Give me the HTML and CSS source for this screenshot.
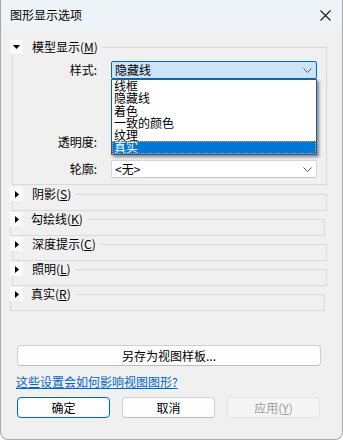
FILE: index.html
```html
<!DOCTYPE html>
<html lang="zh-CN">
<head>
    <meta charset="UTF-8">
    <title>图形显示选项</title>
    <link rel="stylesheet" href="styles.css">
</head>
<body>
    <div class="window">
        <div class="titlebar">
            <span class="title">图形显示选项</span>
            <svg class="close" width="11" height="11" viewBox="0 0 11 11">
                <path d="M0.5 0.5 L10.5 10.5 M10.5 0.5 L0.5 10.5" stroke="#1a1a1a" stroke-width="1.1"/>
            </svg>
        </div>

        <div class="content">
            <fieldset class="group open">
                <legend>
                    <span class="toggle">
                        <svg width="7" height="4" viewBox="0 0 7 4"><polygon points="0,0 7,0 3.5,4" fill="#000"/></svg>
                    </span>
                    <span class="caption">模型显示(<u>M</u>)</span>
                </legend>
                <div class="row first">
                    <span class="label">样式:</span>
                    <div class="combo active">
                        <span>隐藏线</span>
                        <svg class="chev" width="9" height="5" viewBox="0 0 9 5"><path d="M0.5 0.5 L4.5 4.5 L8.5 0.5" fill="none" stroke="#555" stroke-width="1"/></svg>
                        <ul class="dropdown">
                            <li>线框</li>
                            <li>隐藏线</li>
                            <li>着色</li>
                            <li>一致的颜色</li>
                            <li>纹理</li>
                            <li class="selected">真实</li>
                        </ul>
                    </div>
                </div>
                <div class="row trans">
                    <span class="label">透明度:</span>
                    <div class="empty"></div>
                </div>
                <div class="row outline">
                    <span class="label">轮廓:</span>
                    <div class="combo">
                        <span>&lt;无&gt;</span>
                        <svg class="chev" width="9" height="5" viewBox="0 0 9 5"><path d="M0.5 0.5 L4.5 4.5 L8.5 0.5" fill="none" stroke="#555" stroke-width="1"/></svg>
                    </div>
                </div>
            </fieldset>

            <fieldset class="group closed">
                <legend>
                    <span class="toggle"><svg width="4" height="7" viewBox="0 0 4 7"><polygon points="0,0 4,3.5 0,7" fill="#000"/></svg></span>
                    <span class="caption">阴影(<u>S</u>)</span>
                </legend>
                <div class="spacer"></div>
            </fieldset>

            <fieldset class="group closed alt">
                <legend>
                    <span class="toggle"><svg width="4" height="7" viewBox="0 0 4 7"><polygon points="0,0 4,3.5 0,7" fill="#000"/></svg></span>
                    <span class="caption">勾绘线(<u>K</u>)</span>
                </legend>
                <div class="spacer"></div>
            </fieldset>

            <fieldset class="group closed">
                <legend>
                    <span class="toggle"><svg width="4" height="7" viewBox="0 0 4 7"><polygon points="0,0 4,3.5 0,7" fill="#000"/></svg></span>
                    <span class="caption">深度提示(<u>C</u>)</span>
                </legend>
                <div class="spacer"></div>
            </fieldset>

            <fieldset class="group closed">
                <legend>
                    <span class="toggle"><svg width="4" height="7" viewBox="0 0 4 7"><polygon points="0,0 4,3.5 0,7" fill="#000"/></svg></span>
                    <span class="caption">照明(<u>L</u>)</span>
                </legend>
                <div class="spacer"></div>
            </fieldset>

            <fieldset class="group closed alt">
                <legend>
                    <span class="toggle"><svg width="4" height="7" viewBox="0 0 4 7"><polygon points="0,0 4,3.5 0,7" fill="#000"/></svg></span>
                    <span class="caption">真实(<u>R</u>)</span>
                </legend>
                <div class="spacer"></div>
            </fieldset>

            <button class="btn wide">另存为视图样板...</button>

            <a class="help" href="#">这些设置会如何影响视图图形?</a>

            <div class="actions">
                <button class="btn default">确定</button>
                <button class="btn">取消</button>
                <button class="btn disabled">应用(<u>Y</u>)</button>
            </div>
        </div>
    </div>
</body>
</html>
```

FILE: styles.css
```css
* {
    box-sizing: border-box;
}

body {
    margin: 0;
    font-family: "Noto Sans CJK SC", "Noto Sans", sans-serif;
    font-size: 12px;
    color: #000;
    background: #fff;
}

.window {
    width: 343px;
    height: 440px;
    display: flex;
    flex-direction: column;
    border: 1px solid #a8a8a8;
    border-top: none;
    border-radius: 0 0 8px 8px;
    background: #f0f0f0;
    overflow: hidden;
}

.titlebar {
    height: 30px;
    flex: none;
    display: flex;
    align-items: center;
    justify-content: space-between;
    padding: 0 11px 0 9px;
    background: #eef3f8;
}

.title {
    line-height: 14px;
}

.close {
    display: block;
}

.content {
    flex: 1;
    display: flex;
    flex-direction: column;
    padding-top: 10px;
}

/* collapsible groups */
.group {
    margin: 0 0 0 11px;
    padding: 0;
    width: 315px;
    min-width: 0;
    border: 1px solid #d9d9d9;
}

.group.alt {
    margin-left: 9px;
}

.group legend {
    display: flex;
    align-items: center;
    height: 14px;
    padding: 0 4px 0 0;
    margin-left: -3px;
}

.group.alt legend {
    margin-left: -1px;
}

.toggle {
    width: 13px;
    height: 14px;
    display: flex;
    align-items: center;
    justify-content: center;
    background: #fafafa;
}

.toggle svg {
    display: block;
}

.caption {
    margin-left: 9px;
    line-height: 14px;
}

.group.alt .caption {
    margin-left: 8px;
}

.group.closed {
    margin-top: 1px;
}

.group.open + .group.closed {
    margin-top: 2px;
}

.spacer {
    height: 9px;
}

/* model display rows */
.row {
    display: grid;
    grid-template-columns: 1fr 206px;
    column-gap: 14px;
    align-items: center;
    height: 18px;
    margin-right: 9px;
}

.row.first {
    margin-top: 7px;
}

.row.trans {
    margin-top: 54px;
}

.row.outline {
    margin-top: 9px;
    margin-bottom: 6px;
}

.label {
    text-align: right;
    line-height: 14px;
}

.combo {
    position: relative;
    height: 18px;
    display: flex;
    align-items: center;
    justify-content: space-between;
    padding: 0 4px 0 3px;
    background: #fff;
    border: 1px solid #d6d6d6;
    border-bottom-color: #c4c4c4;
    border-radius: 2px;
    line-height: 14px;
}

.combo.active {
    background: #cce4f7;
    border-color: #0067c0;
}

.chev {
    display: block;
}

.dropdown {
    position: absolute;
    top: 17px;
    left: -1px;
    width: 206px;
    height: 76px;
    margin: 0;
    padding: 0;
    list-style: none;
    background: #fff;
    border: 1px solid #1e5e9e;
    box-shadow: 2px 2px 3px rgba(0, 0, 0, 0.45);
    z-index: 10;
}

.dropdown li {
    height: 12.3px;
    line-height: 12px;
    padding-left: 2px;
}

.dropdown li.selected {
    height: 13px;
    background: #0078d7;
    color: #fff;
    outline: 1px dotted #f0a050;
    outline-offset: -1px;
}

/* bottom buttons */
.btn {
    font-family: inherit;
    font-size: 12px;
    height: 21px;
    padding: 0;
    background: #fdfdfd;
    color: #000;
    border: 1px solid #d0d0d0;
    border-bottom-color: #bdbdbd;
    border-radius: 4px;
    line-height: 14px;
}

.btn.wide {
    margin: 34px 0 0 16px;
    width: 304px;
}

.help {
    margin: 9px 0 0 15px;
    color: #0066cc;
    line-height: 14px;
    align-self: flex-start;
}

.actions {
    display: flex;
    gap: 12px;
    margin: 8px 0 0 16px;
}

.actions .btn {
    width: 93px;
}

.btn.default {
    border-color: #0067c0;
}

.btn.disabled {
    background: #f5f5f5;
    border-color: #e5e5e5;
    color: #9d9d9d;
}
```
